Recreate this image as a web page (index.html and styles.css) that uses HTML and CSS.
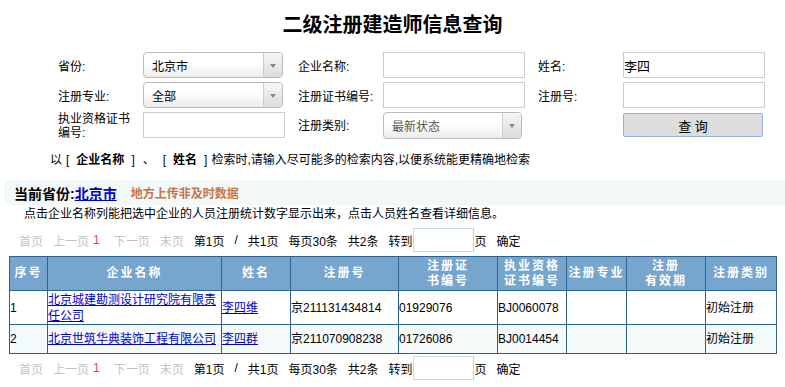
FILE: index.html
```html
<!DOCTYPE html>
<html lang="zh-CN">
<head>
  <meta charset="UTF-8">
  <title>二级注册建造师信息查询</title>
  <link rel="stylesheet" href="styles.css">
</head>
<body>
  <h2 class="title">二级注册建造师信息查询</h2>

  <div class="search-form">
    <label>省份:</label>
    <div class="select"><span>北京市</span><i class="arrow"></i></div>
    <label>企业名称:</label>
    <input type="text" class="field">
    <label>姓名:</label>
    <input type="text" class="field" value="李四">

    <label>注册专业:</label>
    <div class="select"><span>全部</span><i class="arrow"></i></div>
    <label>注册证书编号:</label>
    <input type="text" class="field">
    <label>注册号:</label>
    <input type="text" class="field">

    <label class="two-line">执业资格证书编号:</label>
    <input type="text" class="field">
    <label>注册类别:</label>
    <div class="select grey"><span>最新状态</span><i class="arrow"></i></div>
    <label></label>
    <button class="search-btn">查 询</button>
  </div>

  <p class="hint">以<i>[</i><b>企业名称</b><i>]</i><i>、</i><i>[</i><b>姓名</b><i>]</i>检索时,请输入尽可能多的检索内容,以便系统能更精确地检索</p>

  <div class="province-bar">
    <span class="cur">当前省份:<a href="#">北京市</a></span>
    <span class="warn">地方上传非及时数据</span>
  </div>

  <p class="note">点击企业名称列能把选中企业的人员注册统计数字显示出来，点击人员姓名查看详细信息。</p>

  <div class="pager">
    <span class="off">首页</span><span class="off">上一页</span><span class="cur-page">1</span><span class="off">下一页</span><span class="off">末页</span>
    <span>第1页</span><span>/</span><span>共1页</span><span>每页30条</span><span>共2条</span><span class="goto">转到<input type="text" class="page-input">页</span><span>确定</span>
  </div>

  <table class="result">
    <thead>
      <tr>
        <th class="c1">序号</th>
        <th class="c2">企业名称</th>
        <th class="c3">姓名</th>
        <th class="c4">注册号</th>
        <th class="c5">注册证<br>书编号</th>
        <th class="c6">执业资格<br>证书编号</th>
        <th class="c7">注册专业</th>
        <th class="c8">注册<br>有效期</th>
        <th class="c9">注册类别</th>
      </tr>
    </thead>
    <tbody>
      <tr class="tall">
        <td>1</td>
        <td><a href="#">北京城建勘测设计研究院有限责任公司</a></td>
        <td><a href="#">李四维</a></td>
        <td>京211131434814</td>
        <td>01929076</td>
        <td>BJ0060078</td>
        <td></td>
        <td></td>
        <td>初始注册</td>
      </tr>
      <tr class="alt">
        <td>2</td>
        <td><a href="#">北京世筑华典装饰工程有限公司</a></td>
        <td><a href="#">李四群</a></td>
        <td>京211070908238</td>
        <td>01726086</td>
        <td>BJ0014454</td>
        <td></td>
        <td></td>
        <td>初始注册</td>
      </tr>
    </tbody>
  </table>

  <div class="pager bottom">
    <span class="off">首页</span><span class="off">上一页</span><span class="cur-page">1</span><span class="off">下一页</span><span class="off">末页</span>
    <span>第1页</span><span>/</span><span>共1页</span><span>每页30条</span><span>共2条</span><span class="goto">转到<input type="text" class="page-input">页</span><span>确定</span>
  </div>
</body>
</html>
```

FILE: styles.css
```css
body {
  margin: 0;
  font-family: "Liberation Sans", "Noto Sans CJK SC", sans-serif;
  font-size: 12px;
  color: #000;
  background: #fff;
}
.title {
  margin: 0;
  padding-top: 11px;
  height: 41px;
  box-sizing: border-box;
  text-align: center;
  font-size: 20px;
  line-height: 28px;
  font-weight: bold;
}
.search-form {
  display: grid;
  grid-template-columns: 85px 155px 85px 155px 85px 142px;
  grid-template-rows: 30px 30px 28px;
  align-items: center;
  margin: 11px 0 0 58px;
}
.search-form label {
  padding-right: 6px;
  line-height: 14px;
}
.field {
  width: 142px;
  height: 26px;
  box-sizing: border-box;
  border: 1px solid #ccc;
  padding: 0;
  font-family: inherit;
  font-size: 13px;
  align-self: start;
}
.select {
  width: 140px;
  height: 26px;
  box-sizing: border-box;
  border: 1px solid #b9b9b9;
  border-radius: 4px;
  background: linear-gradient(#fff 40%, #ececec);
  display: flex;
  align-items: center;
  align-self: start;
  font-size: 12px;
}
.select span {
  flex: 1;
  padding-left: 8px;
}
.select.grey {
  width: 139px;
  height: 27px;
  color: #555;
}
.select .arrow {
  width: 18px;
  height: 100%;
  border-left: 1px solid #ccc;
  background: linear-gradient(#f6f6f6, #dcdcdc);
  border-radius: 0 3px 3px 0;
  position: relative;
}
.select .arrow::after {
  content: "";
  position: absolute;
  left: 6px;
  top: 11px;
  border-left: 3px solid transparent;
  border-right: 3px solid transparent;
  border-top: 4px solid #888;
}
.search-btn {
  width: 140px;
  height: 24px;
  align-self: start;
  margin-top: 1px;
  background: #ddd;
  border: 1px solid #8fb2ee;
  border-radius: 2px;
  font-family: inherit;
  font-size: 13px;
  padding: 0;
}
.hint {
  margin: 12px 0 0 50px;
  line-height: 16px;
}
.hint i {
  font-style: normal;
  margin: 0 4px;
}
.hint b {
  margin: 0 3px;
}
.province-bar {
  margin: 12px 0 0 4px;
  height: 25px;
  background: #f3f8f8;
  display: flex;
  align-items: center;
  padding-left: 10px;
}
.province-bar .cur {
  font-size: 14px;
  font-weight: bold;
}
.province-bar a {
  color: #00c;
}
.province-bar .warn {
  margin-left: 14px;
  color: #c8734a;
  font-weight: bold;
}
.note {
  margin: 1px 0 0 24px;
  line-height: 16px;
}
.pager {
  display: flex;
  align-items: center;
  margin: 5px 0 0 19px;
  height: 26px;
}
.pager span {
  margin-right: 10px;
}
.pager .off {
  color: #c4c4c4;
}
.pager .cur-page {
  color: #f35;
  margin-left: -6px;
  margin-right: 14px;
}
.pager .goto {
  display: flex;
  align-items: center;
}
.page-input {
  width: 61px;
  height: 24px;
  box-sizing: border-box;
  border: 1px solid #c6d8e8;
  padding: 0;
  margin-right: 1px;
}
.pager.bottom {
  margin-top: 1px;
}
.result {
  margin: 3px 0 0 9px;
  border-collapse: collapse;
  width: 768px;
  table-layout: fixed;
}
.result th,
.result td {
  border: 1px solid #2b6291;
  padding: 0;
}
.result th {
  background: #76a5cd;
  color: #fff;
  font-weight: bold;
  letter-spacing: 2px;
  line-height: 15px;
  height: 33px;
  text-align: center;
}
.result td {
  height: 28px;
  line-height: 16px;
}
.result tr.tall td {
  height: 33px;
}
.result tr.alt td {
  background: #f4f9f9;
}
.result a {
  color: #00c;
}
.c1 { width: 37px; }
.c2 { width: 173px; }
.c3 { width: 68px; }
.c4 { width: 107px; }
.c5 { width: 98px; }
.c6 { width: 68px; }
.c7 { width: 59px; }
.c8 { width: 78px; }
.c9 { width: 70px; }
```
